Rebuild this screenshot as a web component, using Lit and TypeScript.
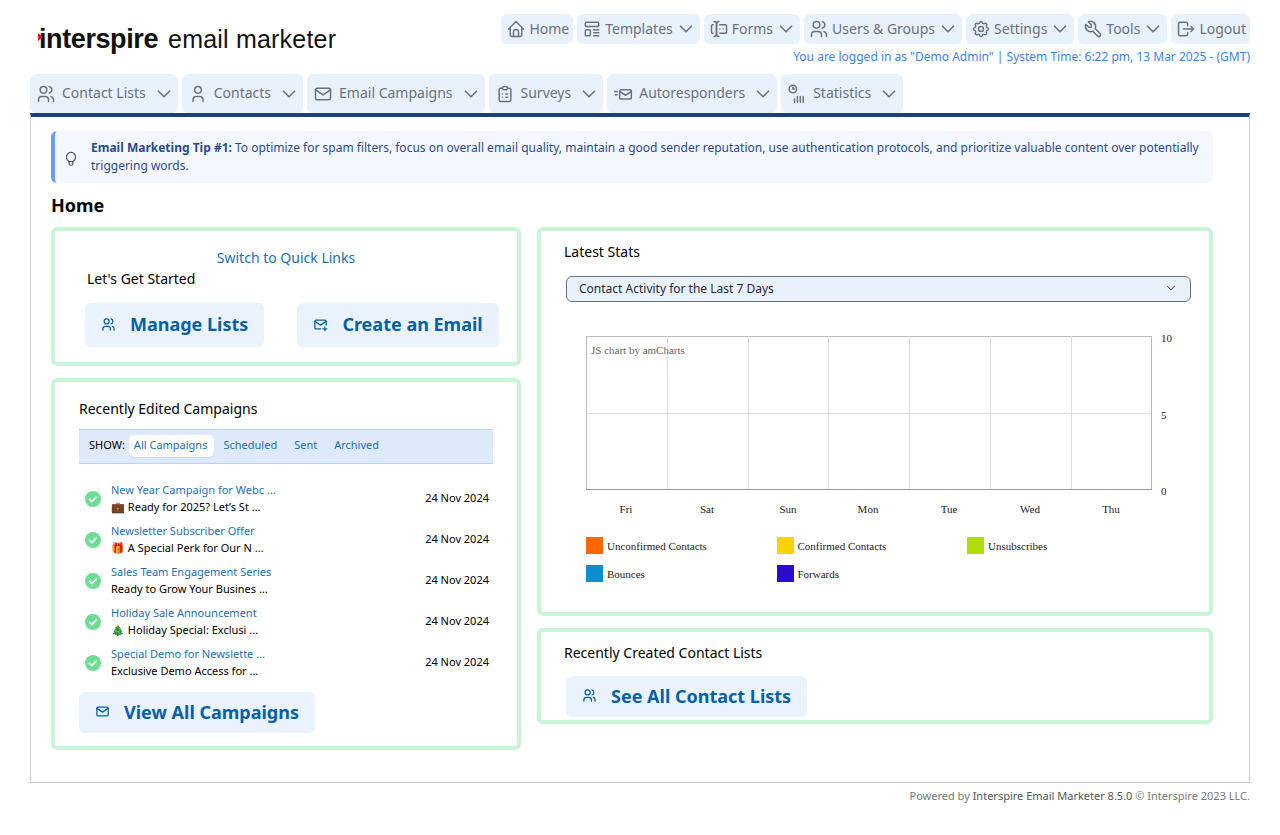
import { LitElement, html, svg, css } from 'lit'
import { customElement } from 'lit/decorators.js'

const icons: Record<string, unknown> = {
    home: svg`<path d="M5 12H3l9-9 9 9h-2"/><path d="M5 12v7a2 2 0 0 0 2 2h10a2 2 0 0 0 2-2v-7"/><path d="M9 21v-6a2 2 0 0 1 2-2h2a2 2 0 0 1 2 2v6"/>`,
    templates: svg`<rect x="4" y="4" width="16" height="5" rx="1"/><rect x="4" y="13" width="6" height="7" rx="1"/><path d="M14 13h6M14 16.5h6M14 20h6"/>`,
    forms: svg`<path d="M12 3a3 3 0 0 0-3 3v12a3 3 0 0 0 3 3"/><path d="M6 3a3 3 0 0 1 3 3v12a3 3 0 0 1-3 3"/><path d="M13 7h7a1 1 0 0 1 1 1v8a1 1 0 0 1-1 1h-7"/><path d="M5 7H4a1 1 0 0 0-1 1v8a1 1 0 0 0 1 1h1"/><path d="M17 12h.01M13 12h.01"/>`,
    users: svg`<circle cx="9" cy="7" r="4"/><path d="M3 21v-2a4 4 0 0 1 4-4h4a4 4 0 0 1 4 4v2"/><path d="M16 3.13a4 4 0 0 1 0 7.75"/><path d="M21 21v-2a4 4 0 0 0-3-3.85"/>`,
    user: svg`<circle cx="12" cy="7" r="4"/><path d="M6 21v-2a4 4 0 0 1 4-4h4a4 4 0 0 1 4 4v2"/>`,
    settings: svg`<path d="M10.325 4.317c.426-1.756 2.924-1.756 3.35 0a1.724 1.724 0 0 0 2.573 1.066c1.543-.94 3.31.826 2.37 2.37a1.724 1.724 0 0 0 1.065 2.572c1.756.426 1.756 2.924 0 3.35a1.724 1.724 0 0 0-1.066 2.573c.94 1.543-.826 3.31-2.37 2.37a1.724 1.724 0 0 0-2.572 1.065c-.426 1.756-2.924 1.756-3.35 0a1.724 1.724 0 0 0-2.573-1.066c-1.543.94-3.31-.826-2.37-2.37a1.724 1.724 0 0 0-1.065-2.572c-1.756-.426-1.756-2.924 0-3.35a1.724 1.724 0 0 0 1.066-2.573c-.94-1.543.826-3.31 2.37-2.37 1 .608 2.296.07 2.572-1.065z"/><circle cx="12" cy="12" r="3"/>`,
    tools: svg`<path d="M7 10h3V7L6.5 3.5a6 6 0 0 1 8 8l6 6a2 2 0 0 1-3 3l-6-6a6 6 0 0 1-8-8L7 10"/>`,
    logout: svg`<path d="M14 8V6a2 2 0 0 0-2-2H5a2 2 0 0 0-2 2v12a2 2 0 0 0 2 2h7a2 2 0 0 0 2-2v-2"/><path d="M9 12h12l-3-3m3 3-3 3"/>`,
    mail: svg`<rect x="3" y="5" width="18" height="14" rx="2"/><path d="M3 7l9 6 9-6"/>`,
    mailplus: svg`<path d="M12 19H5a2 2 0 0 1-2-2V7a2 2 0 0 1 2-2h14a2 2 0 0 1 2 2v6"/><path d="M3 7l9 6 9-6"/><path d="M16 19h6M19 16v6"/>`,
    survey: svg`<path d="M9 5H7a2 2 0 0 0-2 2v12a2 2 0 0 0 2 2h10a2 2 0 0 0 2-2V7a2 2 0 0 0-2-2h-2"/><rect x="9" y="3" width="6" height="4" rx="2"/><path d="M9 12h.01M13 12h2M9 16h.01M13 16h2"/>`,
    auto: svg`<rect x="8" y="7" width="14" height="11" rx="1.5"/><path d="M8 9l7 4.5L22 9"/><path d="M2 9h3M3 13h2"/>`,
    stats: svg`<circle cx="7" cy="6" r="4.5"/><path d="M7 4v2h2"/><path d="M9 22v-4M12.5 22v-7M16 22v-7M19.5 22v-7"/>`,
    bulb: svg`<path d="M9 16a5 5 0 1 1 6 0 3.5 3.5 0 0 0-1 3 2 2 0 0 1-4 0 3.5 3.5 0 0 0-1-3"/><path d="M9.7 17h4.6"/>`,
    chevron: svg`<path d="M6 9l6 6 6-6"/>`,
}

const icon = (name: string) => html`<svg class="icon" viewBox="0 0 24 24">${icons[name]}</svg>`

const topNav = [
    { label: 'Home', icon: 'home', menu: false },
    { label: 'Templates', icon: 'templates', menu: true },
    { label: 'Forms', icon: 'forms', menu: true },
    { label: 'Users & Groups', icon: 'users', menu: true },
    { label: 'Settings', icon: 'settings', menu: true },
    { label: 'Tools', icon: 'tools', menu: true },
    { label: 'Logout', icon: 'logout', menu: false },
]

const tabs = [
    { label: 'Contact Lists', icon: 'users' },
    { label: 'Contacts', icon: 'user' },
    { label: 'Email Campaigns', icon: 'mail' },
    { label: 'Surveys', icon: 'survey' },
    { label: 'Autoresponders', icon: 'auto' },
    { label: 'Statistics', icon: 'stats' },
]

const campaigns = [
    { name: 'New Year Campaign for Webc ...', subject: '💼 Ready for 2025? Let’s St ...' },
    { name: 'Newsletter Subscriber Offer', subject: '🎁 A Special Perk for Our N ...' },
    { name: 'Sales Team Engagement Series', subject: 'Ready to Grow Your Busines ...' },
    { name: 'Holiday Sale Announcement', subject: '🎄 Holiday Special: Exclusi ...' },
    { name: 'Special Demo for Newslette ...', subject: 'Exclusive Demo Access for ...' },
]

const legend = [
    { label: 'Unconfirmed Contacts', color: '#ff6600' },
    { label: 'Confirmed Contacts', color: '#fcd202' },
    { label: 'Unsubscribes', color: '#b0de09' },
    { label: 'Bounces', color: '#0d8ecf' },
    { label: 'Forwards', color: '#2a0cd0' },
]

const days = [
    { label: 'Fri', x: 60 },
    { label: 'Sat', x: 141 },
    { label: 'Sun', x: 222 },
    { label: 'Mon', x: 302 },
    { label: 'Tue', x: 383 },
    { label: 'Wed', x: 464 },
    { label: 'Thu', x: 545 },
]
const gridX = [101.5, 182.5, 262.5, 343.5, 424.5, 505.5]

@customElement('app-root')
export class AppRoot extends LitElement {
    static styles = css`
        :host {
            display: block;
            padding: 0 30px;
            background: #fff;
            font-family: 'Noto Sans', sans-serif;
            font-size: 14px;
            color: #000;
        }

        .icon {
            fill: none;
            stroke: currentColor;
            stroke-width: 1.8;
            stroke-linecap: round;
            stroke-linejoin: round;
            flex: none;
        }

        .header {
            display: flex;
            justify-content: space-between;
            padding-top: 14px;
            height: 60px;
            box-sizing: border-box;
        }

        .logo {
            display: flex;
            align-items: baseline;
            position: relative;
            margin: 10px 0 0 9px;
            height: 34px;
            white-space: nowrap;
            color: #111;
            font-family: 'Liberation Sans', sans-serif;
        }

        .logo-mark {
            font-size: 27px;
            font-weight: 700;
            letter-spacing: -0.4px;
        }

        .logo-name {
            font-size: 25px;
            letter-spacing: 0.2px;
            margin-left: 10px;
        }

        .logo-arrow {
            position: absolute;
            left: -1px;
            top: 9px;
            border-left: 5px solid #e01b24;
            border-top: 4px solid transparent;
            border-bottom: 4px solid transparent;
        }

        .account {
            display: flex;
            flex-direction: column;
            align-items: flex-end;
        }

        .top-nav {
            display: flex;
            gap: 4px;
        }

        .top-item {
            display: flex;
            align-items: center;
            height: 30px;
            padding: 0 4px 0 5px;
            gap: 3px;
            background: #e9f1fc;
            border-radius: 6px;
            color: #6b7280;
        }

        .top-item span {
            margin-bottom: 2px;
        }

        .top-item .icon {
            width: 20px;
            height: 20px;
        }

        .top-item .chevron.icon {
            width: 22px;
            height: 22px;
            margin: 0 -1px;
        }

        .logged {
            font-size: 12px;
            line-height: 16px;
            margin-top: 5px;
            color: #3b82f6;
        }

        .tabs {
            display: flex;
            gap: 4px;
            margin-top: 14px;
        }

        .tab {
            display: flex;
            align-items: center;
            height: 39px;
            padding: 0 6px;
            background: #e9f1fc;
            border-radius: 6px;
            color: #6b7280;
        }

        .tab span {
            margin-bottom: 2px;
        }

        .tab .icon {
            width: 20px;
            height: 20px;
            margin-right: 6px;
        }

        .tab .chevron.icon {
            width: 22px;
            height: 22px;
            margin: 0 -3px 0 7px;
        }

        .main {
            border: 1px solid #ccc;
            border-top: 4px solid #1e3f7a;
            padding: 14px 36px 32px 20px;
            display: block;
        }

        .tip {
            display: flex;
            align-items: center;
            gap: 9px;
            padding: 7.5px 12px 7.5px 5px;
            background: #f4f7fe;
            border-left: 4px solid #6b9df7;
            border-radius: 6px;
            font-size: 12px;
            line-height: 18.5px;
            color: #2b4a8c;
        }

        .tip .icon {
            width: 22px;
            height: 22px;
            stroke-width: 1.3;
            color: #4b5563;
        }

        .tip b {
            font-weight: 700;
        }

        h1 {
            margin: 10px 0 9px;
            font-size: 18px;
            font-weight: 700;
            line-height: 25px;
        }

        .columns {
            display: grid;
            grid-template-columns: 470px 676px;
            gap: 16px;
        }

        .column {
            display: flex;
            flex-direction: column;
            gap: 12px;
        }

        .card {
            border: 4px solid #c8f4d8;
            border-radius: 6px;
            box-sizing: border-box;
        }

        .card-title {
            line-height: 20px;
        }

        .action {
            display: inline-flex;
            align-items: center;
            box-sizing: border-box;
            gap: 14px;
            padding: 0 16px 2px;
            background: #eaf2fd;
            border-radius: 6px;
            font-size: 18px;
            font-weight: 700;
            color: #0560a8;
        }

        .action .icon {
            width: 15px;
            height: 15px;
            stroke-width: 2;
        }

        .start {
            padding: 17px 15px 15px 30px;
        }

        .switch {
            text-align: center;
            line-height: 20px;
            color: #1a6fb5;
            margin-left: -30px;
            margin-right: -15px;
        }

        .started {
            line-height: 20px;
            margin: 1px 0 0 2px;
        }

        .start-actions {
            display: flex;
            gap: 33px;
            margin-top: 14px;
        }

        .start-actions .action {
            height: 44px;
        }

        .recent {
            padding: 17px 24px 13px;
        }

        .show {
            display: flex;
            align-items: center;
            height: 35px;
            box-sizing: border-box;
            margin-top: 10px;
            padding: 0 0 2px 10px;
            background: #deeafc;
            border-top: 1px solid #b5d5e5;
            border-bottom: 1px solid #b5d5e5;
            font-size: 11px;
        }

        .show-label {
            margin-bottom: 2px;
        }

        .show a {
            color: #1a6fb5;
            padding: 0 6px 2px;
            margin-right: 5px;
            line-height: 20px;
        }

        .show a.active {
            background: #fff;
            border-radius: 5px;
            box-shadow: 0 1px 1px #c9d8ee;
            padding: 0 7px 2px 5px;
            margin-left: 4px;
            margin-right: 3px;
        }

        .rows {
            display: flex;
            flex-direction: column;
            gap: 7px;
            margin-top: 17px;
        }

        .row {
            display: flex;
            align-items: center;
            font-size: 11px;
            line-height: 17px;
            padding: 0 4px 0 6px;
        }

        .check {
            width: 16px;
            height: 16px;
            flex: none;
            margin: 2px 10px 0 0;
        }

        .row-text {
            flex: 1;
            white-space: nowrap;
        }

        .row-name {
            color: #1a6fb5;
        }

        .row-date {
            margin-bottom: 2px;
        }

        .view-all {
            height: 41px;
            margin-top: 13px;
        }

        .stats {
            padding: 11px 18px 30px 23px;
        }

        .select {
            display: flex;
            align-items: center;
            justify-content: space-between;
            height: 26px;
            box-sizing: border-box;
            margin: 14px 0 0 2px;
            padding: 0 12px 2px;
            background: #e9f1fc;
            border: 1px solid #6b7280;
            border-radius: 6px;
            font-size: 12px;
            color: #1f2937;
        }

        .select .icon {
            width: 14px;
            height: 14px;
            color: #4b5563;
        }

        .chart {
            display: block;
            width: 625px;
            height: 205px;
            margin: 24px 0 0 2px;
            font-family: 'Liberation Serif', serif;
            font-size: 11px;
        }

        .chart text {
            fill: #222;
        }

        .chart .credit {
            fill: #666;
        }

        .legend {
            display: grid;
            grid-template-columns: repeat(3, 190.5px);
            row-gap: 11px;
            margin: 6px 0 0 22px;
            font-family: 'Liberation Serif', serif;
            font-size: 11px;
            color: #222;
        }

        .legend-item {
            display: flex;
            align-items: center;
            gap: 4px;
        }

        .swatch {
            width: 17px;
            height: 17px;
        }

        .lists {
            padding: 11px 0 3px 23px;
        }

        .lists .action {
            height: 41px;
            margin: 13px 0 0 2px;
        }

        .footer {
            padding-top: 5px;
            text-align: right;
            font-size: 11px;
            line-height: 16px;
            color: #777;
        }

        .footer span {
            color: #555;
        }
    `

    private renderChart() {
        return html`<svg class="chart" viewBox="0 0 625 205">
            <rect x="20.5" y="10.5" width="565" height="153" fill="#fff" stroke="#bbb"/>
            <path d="M20.5 87.5H585" stroke="#ddd"/>
            ${gridX.map((x) => svg`<path d=${`M${x} 10V163`} stroke="#ddd"/>`)}
            <path d="M20 163.5H586" stroke="#999"/>
            <text class="credit" x="25" y="28">JS chart by amCharts</text>
            <text x="595" y="16">10</text>
            <text x="595" y="93">5</text>
            <text x="595" y="169">0</text>
            ${days.map(
                (d) => svg`<text x=${d.x} y="187" text-anchor="middle">${d.label}</text>`
            )}
        </svg>`
    }

    render() {
        return html`
            <div class="header">
                <div class="logo">
                    <span class="logo-arrow"></span>
                    <span class="logo-mark">interspire</span>
                    <span class="logo-name">email marketer</span>
                </div>
                <div class="account">
                    <nav class="top-nav">
                        ${topNav.map(
                            (n) => html`<div class="top-item">
                                ${icon(n.icon)}<span>${n.label}</span>
                                ${n.menu
                                    ? html`<svg class="icon chevron" viewBox="0 0 24 24">${icons.chevron}</svg>`
                                    : ''}
                            </div>`
                        )}
                    </nav>
                    <div class="logged">
                        You are logged in as "Demo Admin" | System Time: 6:22 pm, 13 Mar 2025 - (GMT)
                    </div>
                </div>
            </div>

            <nav class="tabs">
                ${tabs.map(
                    (t) => html`<div class="tab">
                        ${icon(t.icon)}<span>${t.label}</span>
                        <svg class="icon chevron" viewBox="0 0 24 24">${icons.chevron}</svg>
                    </div>`
                )}
            </nav>

            <div class="main">
                <div class="tip">
                    ${icon('bulb')}
                    <div>
                        <b>Email Marketing Tip #1:</b> To optimize for spam filters, focus on overall
                        email quality, maintain a good sender reputation, use authentication protocols,
                        and prioritize valuable content over potentially triggering words.
                    </div>
                </div>

                <h1>Home</h1>

                <div class="columns">
                    <div class="column">
                        <section class="card start">
                            <div class="switch">Switch to Quick Links</div>
                            <div class="started">Let's Get Started</div>
                            <div class="start-actions">
                                <a class="action">${icon('users')}Manage Lists</a>
                                <a class="action">${icon('mailplus')}Create an Email</a>
                            </div>
                        </section>

                        <section class="card recent">
                            <div class="card-title">Recently Edited Campaigns</div>
                            <div class="show">
                                <span class="show-label">SHOW:</span>
                                <a class="active">All Campaigns</a>
                                <a>Scheduled</a>
                                <a>Sent</a>
                                <a>Archived</a>
                            </div>
                            <div class="rows">
                                ${campaigns.map(
                                    (c) => html`<div class="row">
                                        <svg class="check" viewBox="0 0 16 16">
                                            <circle cx="8" cy="8" r="8" fill="#6edc94"/>
                                            <path d="M4.6 8.3l2.3 2.3 4.4-4.6" fill="none" stroke="#fff" stroke-width="1.6" stroke-linecap="round" stroke-linejoin="round"/>
                                        </svg>
                                        <div class="row-text">
                                            <div class="row-name">${c.name}</div>
                                            <div>${c.subject}</div>
                                        </div>
                                        <div class="row-date">24 Nov 2024</div>
                                    </div>`
                                )}
                            </div>
                            <a class="action view-all">${icon('mail')}View All Campaigns</a>
                        </section>
                    </div>

                    <div class="column">
                        <section class="card stats">
                            <div class="card-title">Latest Stats</div>
                            <div class="select">
                                Contact Activity for the Last 7 Days ${icon('chevron')}
                            </div>
                            ${this.renderChart()}
                            <div class="legend">
                                ${legend.map(
                                    (l) => html`<div class="legend-item">
                                        <span class="swatch" style="background:${l.color}"></span>${l.label}
                                    </div>`
                                )}
                            </div>
                        </section>

                        <section class="card lists">
                            <div class="card-title">Recently Created Contact Lists</div>
                            <a class="action">${icon('users')}See All Contact Lists</a>
                        </section>
                    </div>
                </div>
            </div>

            <div class="footer">
                Powered by <span>Interspire Email Marketer 8.5.0</span> © Interspire 2023 LLC.
            </div>
        `
    }
}
